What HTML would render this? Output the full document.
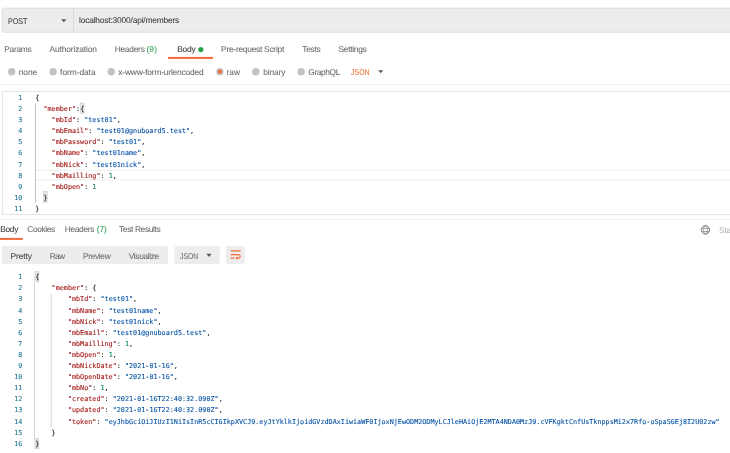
<!DOCTYPE html>
<html><head><meta charset="utf-8"><title>Postman</title>
<style>
html,body{margin:0;padding:0;background:#fff;}
body{text-rendering:geometricPrecision;width:730px;height:453px;position:relative;overflow:hidden;font-family:"Liberation Sans",sans-serif;font-size:8px;color:#6b6b6b;}
#w{position:absolute;left:0;top:0;width:730px;height:453px;will-change:transform;overflow:hidden;}
#bg{position:absolute;left:0;top:0;}
.t{position:absolute;white-space:nowrap;line-height:10px;font-size:8px;color:#6c6c6c;-webkit-text-stroke:0.08px currentColor;}
.g{color:#32a455;}
.o{color:#f26b3a;}
.dk{color:#404040;}
.ln{position:absolute;left:0;width:22.3px;text-align:right;font-family:"DejaVu Sans Mono","Liberation Mono",monospace;font-size:6.777px;line-height:11.1px;height:11.1px;color:#237893;-webkit-text-stroke:0.1px currentColor;}
.cl{position:absolute;left:35.3px;font-family:"DejaVu Sans Mono","Liberation Mono",monospace;font-size:6.777px;line-height:11.1px;height:11.1px;white-space:pre;color:#1e1e1e;-webkit-text-stroke:0.1px currentColor;}
.k{color:#a31515;}
.s{color:#0451a5;}
.n{color:#098658;}
.p{color:#222;}
.b{color:#222;}
</style></head><body><div id="w">
<svg id="bg" width="730" height="453" viewBox="0 0 730 453">
<!-- URL bar -->
<rect x="2.2" y="8.2" width="740" height="24.1" rx="1.6" fill="#ececec" stroke="#d2d2d2" stroke-width="0.7"/>
<rect x="73.2" y="8.4" width="0.7" height="23.8" fill="#d4d4d4"/>
<path d="M61.2 19.3h5.2l-2.6 3z" fill="#555"/>
<!-- request tabs -->
<circle cx="200.8" cy="49.6" r="2.6" fill="#26a147"/>
<rect x="168" y="56.9" width="45" height="2" fill="#f26b3a"/>
<!-- radios -->
<g fill="#c2c2c2">
<circle cx="11.7" cy="71.7" r="3.7"/><circle cx="53.1" cy="71.7" r="3.7"/><circle cx="111.2" cy="71.7" r="3.7"/>
<circle cx="219.9" cy="71.7" r="3.7"/><circle cx="255.8" cy="71.7" r="3.7"/><circle cx="301.1" cy="71.7" r="3.7"/>
</g>
<circle cx="219.9" cy="71.7" r="2.15" fill="#f26b3a"/>
<path d="M378.1 70.2h5.2l-2.6 3.1z" fill="#555"/>
<rect x="0" y="84.1" width="730" height="0.6" fill="#e9e9e9"/>
<!-- request editor -->
<rect x="2.3" y="91.6" width="740" height="122.8" fill="#fff" stroke="#dadada" stroke-width="0.7"/>
<rect x="35.6" y="169.7" width="700" height="1.1" fill="#eeeeee"/>
<rect x="35.6" y="179.2" width="700" height="1.1" fill="#eeeeee"/>
<rect x="35.1" y="103.5" width="0.7" height="99.2" fill="#a6a6a6"/>
<g fill="#e6e6e6" stroke="#c4c4c4" stroke-width="0.5">
<rect x="80.2" y="103" width="3.9" height="10.3"/>
<rect x="43.3" y="191.6" width="3.9" height="10.6"/>
<rect x="34.9" y="271.6" width="3.9" height="10.4"/>
<rect x="34.9" y="438.2" width="3.9" height="10.6"/>
</g>
<!-- response -->
<rect x="0" y="219.1" width="730" height="0.6" fill="#e4e4e4"/>
<rect x="0" y="237.9" width="22.8" height="2" fill="#f26b3a"/>
<g fill="none" stroke="#585858" stroke-width="0.8"><circle cx="705.5" cy="229.9" r="4.15"/></g>
<g fill="none" stroke="#6c6c6c" stroke-width="0.55"><ellipse cx="705.5" cy="229.9" rx="1.95" ry="4.1"/><path d="M701.8 228.5h7.4M701.8 231.5h7.4"/></g>
<g fill="#ededed">
<rect x="2" y="246.1" width="166" height="18.2" rx="1.8"/>
<rect x="174.5" y="246.1" width="45.3" height="18.2" rx="1.8"/>
<rect x="226.2" y="246.1" width="18.7" height="18.2" rx="1.8"/>
</g>
<path d="M206.4 253.8h5.2l-2.6 3.1z" fill="#555"/>
<g transform="translate(229 248)"><g fill="none" stroke="#f26b3a" stroke-width="1.1"><path d="M1.6 2.9h10M1.6 6.6h7.9a1.75 1.75 0 0 1 0 3.5H7.6M1.6 10.1h3.6"/></g><path d="M6.3 10.1l2.1-1.6v3.2z" fill="#f26b3a"/></g>
<rect x="34.1" y="283" width="0.9" height="155.4" fill="#d2d2d2"/>
<rect x="50.7" y="294.1" width="0.9" height="133.2" fill="#d2d2d2"/>
</svg>

<div class="t" style="left:719.1px;top:224.7px;font-size:8.4px;letter-spacing:-0.3px;color:#adadad;-webkit-text-stroke:0">Status: 200 OK</div>
<div class="ln" style="top:92.90px">1</div>
<div class="cl" style="top:92.90px"><span class="p">{</span></div>
<div class="ln" style="top:104.00px">2</div>
<div class="cl" style="top:104.00px">  <span class="k">"member"</span><span class="p">:</span><span class="b">{</span></div>
<div class="ln" style="top:115.10px">3</div>
<div class="cl" style="top:115.10px">    <span class="k">"mbId"</span><span class="p">: </span><span class="s">"test01"</span><span class="p">,</span></div>
<div class="ln" style="top:126.20px">4</div>
<div class="cl" style="top:126.20px">    <span class="k">"mbEmail"</span><span class="p">: </span><span class="s">"test01@gnuboard5.test"</span><span class="p">,</span></div>
<div class="ln" style="top:137.30px">5</div>
<div class="cl" style="top:137.30px">    <span class="k">"mbPassword"</span><span class="p">: </span><span class="s">"test01"</span><span class="p">,</span></div>
<div class="ln" style="top:148.40px">6</div>
<div class="cl" style="top:148.40px">    <span class="k">"mbName"</span><span class="p">: </span><span class="s">"test01name"</span><span class="p">,</span></div>
<div class="ln" style="top:159.50px">7</div>
<div class="cl" style="top:159.50px">    <span class="k">"mbNick"</span><span class="p">: </span><span class="s">"test01nick"</span><span class="p">,</span></div>
<div class="ln" style="top:170.60px">8</div>
<div class="cl" style="top:170.60px">    <span class="k">"mbMailling"</span><span class="p">: </span><span class="n">1</span><span class="p">,</span></div>
<div class="ln" style="top:181.70px">9</div>
<div class="cl" style="top:181.70px">    <span class="k">"mbOpen"</span><span class="p">: </span><span class="n">1</span></div>
<div class="ln" style="top:192.80px">10</div>
<div class="cl" style="top:192.80px">  <span class="b">}</span></div>
<div class="ln" style="top:203.90px">11</div>
<div class="cl" style="top:203.90px"><span class="p">}</span></div>
<div class="ln" style="top:272.20px">1</div>
<div class="cl" style="top:272.20px"><span class="b">{</span></div>
<div class="ln" style="top:283.30px">2</div>
<div class="cl" style="top:283.30px">    <span class="k">"member"</span><span class="p">: {</span></div>
<div class="ln" style="top:294.40px">3</div>
<div class="cl" style="top:294.40px">        <span class="k">"mbId"</span><span class="p">: </span><span class="s">"test01"</span><span class="p">,</span></div>
<div class="ln" style="top:305.50px">4</div>
<div class="cl" style="top:305.50px">        <span class="k">"mbName"</span><span class="p">: </span><span class="s">"test01name"</span><span class="p">,</span></div>
<div class="ln" style="top:316.60px">5</div>
<div class="cl" style="top:316.60px">        <span class="k">"mbNick"</span><span class="p">: </span><span class="s">"test01nick"</span><span class="p">,</span></div>
<div class="ln" style="top:327.70px">6</div>
<div class="cl" style="top:327.70px">        <span class="k">"mbEmail"</span><span class="p">: </span><span class="s">"test01@gnuboard5.test"</span><span class="p">,</span></div>
<div class="ln" style="top:338.80px">7</div>
<div class="cl" style="top:338.80px">        <span class="k">"mbMailling"</span><span class="p">: </span><span class="n">1</span><span class="p">,</span></div>
<div class="ln" style="top:349.90px">8</div>
<div class="cl" style="top:349.90px">        <span class="k">"mbOpen"</span><span class="p">: </span><span class="n">1</span><span class="p">,</span></div>
<div class="ln" style="top:361.00px">9</div>
<div class="cl" style="top:361.00px">        <span class="k">"mbNickDate"</span><span class="p">: </span><span class="s">"2021-01-16"</span><span class="p">,</span></div>
<div class="ln" style="top:372.10px">10</div>
<div class="cl" style="top:372.10px">        <span class="k">"mbOpenDate"</span><span class="p">: </span><span class="s">"2021-01-16"</span><span class="p">,</span></div>
<div class="ln" style="top:383.20px">11</div>
<div class="cl" style="top:383.20px">        <span class="k">"mbNo"</span><span class="p">: </span><span class="n">1</span><span class="p">,</span></div>
<div class="ln" style="top:394.30px">12</div>
<div class="cl" style="top:394.30px">        <span class="k">"created"</span><span class="p">: </span><span class="s">"2021-01-16T22:40:32.090Z"</span><span class="p">,</span></div>
<div class="ln" style="top:405.40px">13</div>
<div class="cl" style="top:405.40px">        <span class="k">"updated"</span><span class="p">: </span><span class="s">"2021-01-16T22:40:32.090Z"</span><span class="p">,</span></div>
<div class="ln" style="top:416.50px">14</div>
<div class="cl" style="top:416.50px">        <span class="k">"token"</span><span class="p">: </span><span class="s">"eyJhbGciOiJIUzI1NiIsInR5cCI6IkpXVCJ9.eyJtYklkIjoidGVzdDAxIiwiaWF0IjoxNjEwODM2ODMyLCJleHAiOjE2MTA4NDA0MzJ9.cVFKgktCnfUsTknppsMi2x7Rfo-oSpaS6Ej8I2U02zw"</span></div>
<div class="ln" style="top:427.60px">15</div>
<div class="cl" style="top:427.60px">    <span class="p">}</span></div>
<div class="ln" style="top:438.70px">16</div>
<div class="cl" style="top:438.70px"><span class="b">}</span></div>
<div class="t dk" id="post" style="left:8.02px;top:15.82px;font-size:8.4px;letter-spacing:0.000px;transform:scaleX(0.8536);transform-origin:0 0;">POST</div>
<div class="t dk" id="url" style="left:79.02px;top:15.12px;font-size:8.4px;letter-spacing:-0.179px;">localhost:3000/api/members</div>
<div class="t " id="t1" style="left:4.31px;top:44.22px;font-size:8.4px;letter-spacing:-0.304px;">Params</div>
<div class="t " id="t2" style="left:49.50px;top:44.22px;font-size:8.4px;letter-spacing:-0.114px;">Authorization</div>
<div class="t " id="t3" style="left:114.64px;top:44.22px;font-size:8.4px;letter-spacing:-0.238px;">Headers</div>
<div class="t g" id="t3n" style="left:146.39px;top:44.22px;font-size:8.4px;letter-spacing:0.155px;">(9)</div>
<div class="t dk" id="t4" style="left:177.17px;top:44.22px;font-size:8.4px;letter-spacing:-0.215px;">Body</div>
<div class="t " id="t5" style="left:221.12px;top:44.22px;font-size:8.4px;letter-spacing:-0.258px;">Pre-request Script</div>
<div class="t " id="t6" style="left:302.30px;top:44.22px;font-size:8.4px;letter-spacing:-0.291px;">Tests</div>
<div class="t " id="t7" style="left:338.58px;top:44.22px;font-size:8.4px;letter-spacing:-0.293px;">Settings</div>
<div class="t " id="r1" style="left:18.73px;top:67.12px;font-size:8.4px;letter-spacing:-0.026px;">none</div>
<div class="t " id="r2" style="left:60.12px;top:67.12px;font-size:8.4px;letter-spacing:-0.051px;">form-data</div>
<div class="t " id="r3" style="left:118.34px;top:67.12px;font-size:8.4px;letter-spacing:-0.179px;">x-www-form-urlencoded</div>
<div class="t " id="r4" style="left:226.42px;top:67.12px;font-size:8.4px;letter-spacing:0.116px;">raw</div>
<div class="t " id="r5" style="left:263.25px;top:67.12px;font-size:8.4px;letter-spacing:-0.134px;">binary</div>
<div class="t " id="r6" style="left:308.27px;top:67.12px;font-size:8.4px;letter-spacing:-0.392px;">GraphQL</div>
<div class="t o" id="r7" style="left:350.88px;top:67.12px;font-size:8.4px;letter-spacing:0.000px;transform:scaleX(0.8344);transform-origin:0 0;">JSON</div>
<div class="t dk" id="b1" style="left:0.17px;top:224.42px;font-size:8.4px;letter-spacing:-0.266px;">Body</div>
<div class="t " id="b2" style="left:27.28px;top:224.42px;font-size:8.4px;letter-spacing:-0.378px;">Cookies</div>
<div class="t " id="b3" style="left:64.64px;top:224.42px;font-size:8.4px;letter-spacing:-0.297px;">Headers</div>
<div class="t g" id="b3n" style="left:96.83px;top:224.42px;font-size:8.4px;letter-spacing:-0.152px;">(7)</div>
<div class="t " id="b4" style="left:119.02px;top:224.42px;font-size:8.4px;letter-spacing:-0.360px;">Test Results</div>
<div class="t dk" id="p1" style="left:10.61px;top:250.52px;font-size:8.4px;letter-spacing:-0.111px;">Pretty</div>
<div class="t " id="p2" style="left:49.69px;top:250.52px;font-size:8.4px;letter-spacing:-0.642px;">Raw</div>
<div class="t " id="p3" style="left:82.95px;top:250.52px;font-size:8.4px;letter-spacing:-0.334px;">Preview</div>
<div class="t " id="p4" style="left:128.74px;top:250.52px;font-size:8.4px;letter-spacing:-0.364px;">Visualize</div>
<div class="t " id="p5" style="left:179.86px;top:250.52px;font-size:8.4px;letter-spacing:0.000px;transform:scaleX(0.8091);transform-origin:0 0;">JSON</div>
</div></body></html>
